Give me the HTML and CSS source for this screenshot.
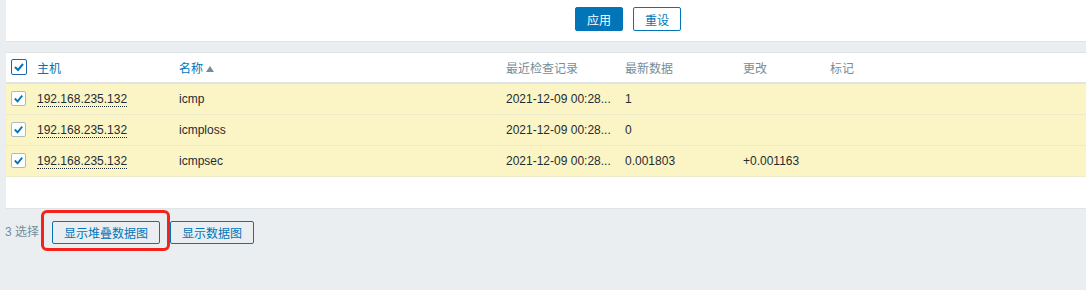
FILE: index.html
```html
<!DOCTYPE html>
<html lang="zh">
<head>
    <meta charset="UTF-8" />
    <title>最新数据</title>
    <link rel="stylesheet" href="styles.css">
</head>
<body>
    <div class="filter">
        <div class="filter-buttons">
            <button class="btn-apply">应用</button>
            <button class="btn-alt">重设</button>
        </div>
    </div>

    <div class="list">
        <div class="row head">
            <div class="cell"><span class="check on-head"><svg viewBox="0 0 14 14"><polyline points="3,7 6,10 11,4" /></svg></span></div>
            <div class="cell"><a class="sort">主机</a></div>
            <div class="cell"><a class="sort">名称</a><span class="arrow"></span></div>
            <div class="cell">最近检查记录</div>
            <div class="cell">最新数据</div>
            <div class="cell">更改</div>
            <div class="cell">标记</div>
        </div>
        <div class="row sel">
            <div class="cell"><span class="check"><svg viewBox="0 0 14 14"><polyline points="3,7 6,10 11,4" /></svg></span></div>
            <div class="cell"><a class="host">192.168.235.132</a></div>
            <div class="cell">icmp</div>
            <div class="cell">2021-12-09 00:28...</div>
            <div class="cell">1</div>
            <div class="cell"></div>
            <div class="cell"></div>
        </div>
        <div class="row sel">
            <div class="cell"><span class="check"><svg viewBox="0 0 14 14"><polyline points="3,7 6,10 11,4" /></svg></span></div>
            <div class="cell"><a class="host">192.168.235.132</a></div>
            <div class="cell">icmploss</div>
            <div class="cell">2021-12-09 00:28...</div>
            <div class="cell">0</div>
            <div class="cell"></div>
            <div class="cell"></div>
        </div>
        <div class="row sel">
            <div class="cell"><span class="check"><svg viewBox="0 0 14 14"><polyline points="3,7 6,10 11,4" /></svg></span></div>
            <div class="cell"><a class="host">192.168.235.132</a></div>
            <div class="cell">icmpsec</div>
            <div class="cell">2021-12-09 00:28...</div>
            <div class="cell">0.001803</div>
            <div class="cell">+0.001163</div>
            <div class="cell"></div>
        </div>
        <div class="list-end"></div>
    </div>

    <div class="actions">
        <span class="count">3 选择</span>
        <span class="marked"><button class="btn-alt">显示堆叠数据图</button></span>
        <button class="btn-alt">显示数据图</button>
    </div>
</body>
</html>
```

FILE: styles.css
```css
body {
    margin: 0;
    background-color: #ebeef1;
    font-family: "Liberation Sans", Arial, "Noto Sans CJK SC", sans-serif;
    font-size: 12px;
    color: #1f2c33;
}

button {
    font-family: "Liberation Sans", Arial, "Noto Sans CJK SC", sans-serif;
    font-size: 12px;
    height: 24px;
    padding: 0 11px;
    border-radius: 2px;
    cursor: pointer;
}

.filter {
    background-color: #fff;
    margin-left: 6px;
    height: 41px;
    border-bottom: 1px solid #dfe4e7;
}

.filter-buttons {
    display: flex;
    gap: 10px;
    padding: 7px 0 0 569px;
}

.btn-apply {
    width: 48px;
    background-color: #0275b8;
    border: 1px solid #0275b8;
    color: #fff;
}

.btn-alt {
    background-color: transparent;
    border: 1px solid #0275b8;
    color: #0275b8;
}

.filter .btn-alt {
    width: 48px;
    background-color: #fff;
}

.list {
    margin: 10px 0 0 6px;
    background-color: #fff;
    border-top: 1px solid #dfe4e7;
    border-bottom: 1px solid #dfe4e7;
}

.row {
    display: grid;
    grid-template-columns: 26px 142px 327px 119px 118px 87px 1fr;
    align-items: center;
    height: 30px;
    border-bottom: 1px solid #ebeef1;
}

.row.head {
    height: 29px;
    border-bottom: 2px solid #dfe4e7;
    color: #768d99;
}

.row.sel {
    background-color: #fbf5c5;
    border-bottom: 1px solid #eeeacc;
}

.cell {
    padding-left: 5px;
    white-space: nowrap;
    overflow: hidden;
    padding-bottom: 1px;
}

.sort {
    color: #0275b8;
}

.arrow {
    display: inline-block;
    margin-left: 3px;
    border-left: 4px solid transparent;
    border-right: 4px solid transparent;
    border-bottom: 6px solid #768d99;
    vertical-align: 1px;
}

.check {
    display: flex;
    width: 13px;
    height: 13px;
    border: 1px solid #acbbc2;
    border-radius: 2px;
    background-color: #fff;
}

.check.on-head {
    width: 14px;
    height: 14px;
    border-color: #1f65a6;
}

.check svg {
    width: 100%;
    height: 100%;
}

.check polyline {
    fill: none;
    stroke: #0275b8;
    stroke-width: 2;
}

.host {
    color: #1f2c33;
    border-bottom: 1px dotted #1f2c33;
}

.list-end {
    height: 31px;
}

.actions {
    display: flex;
    align-items: flex-start;
    padding: 1px 0 0 5px;
}

.count {
    color: #768d99;
    line-height: 23px;
    margin: 11px 2px 0 0;
}

.actions .btn-alt {
    display: block;
    height: 23px;
}

.actions > .btn-alt {
    margin-top: 11px;
}

.marked {
    display: block;
    padding: 8px 7px 4px 8px;
    border: 3px solid #f5221b;
    border-radius: 6px;
}
```
